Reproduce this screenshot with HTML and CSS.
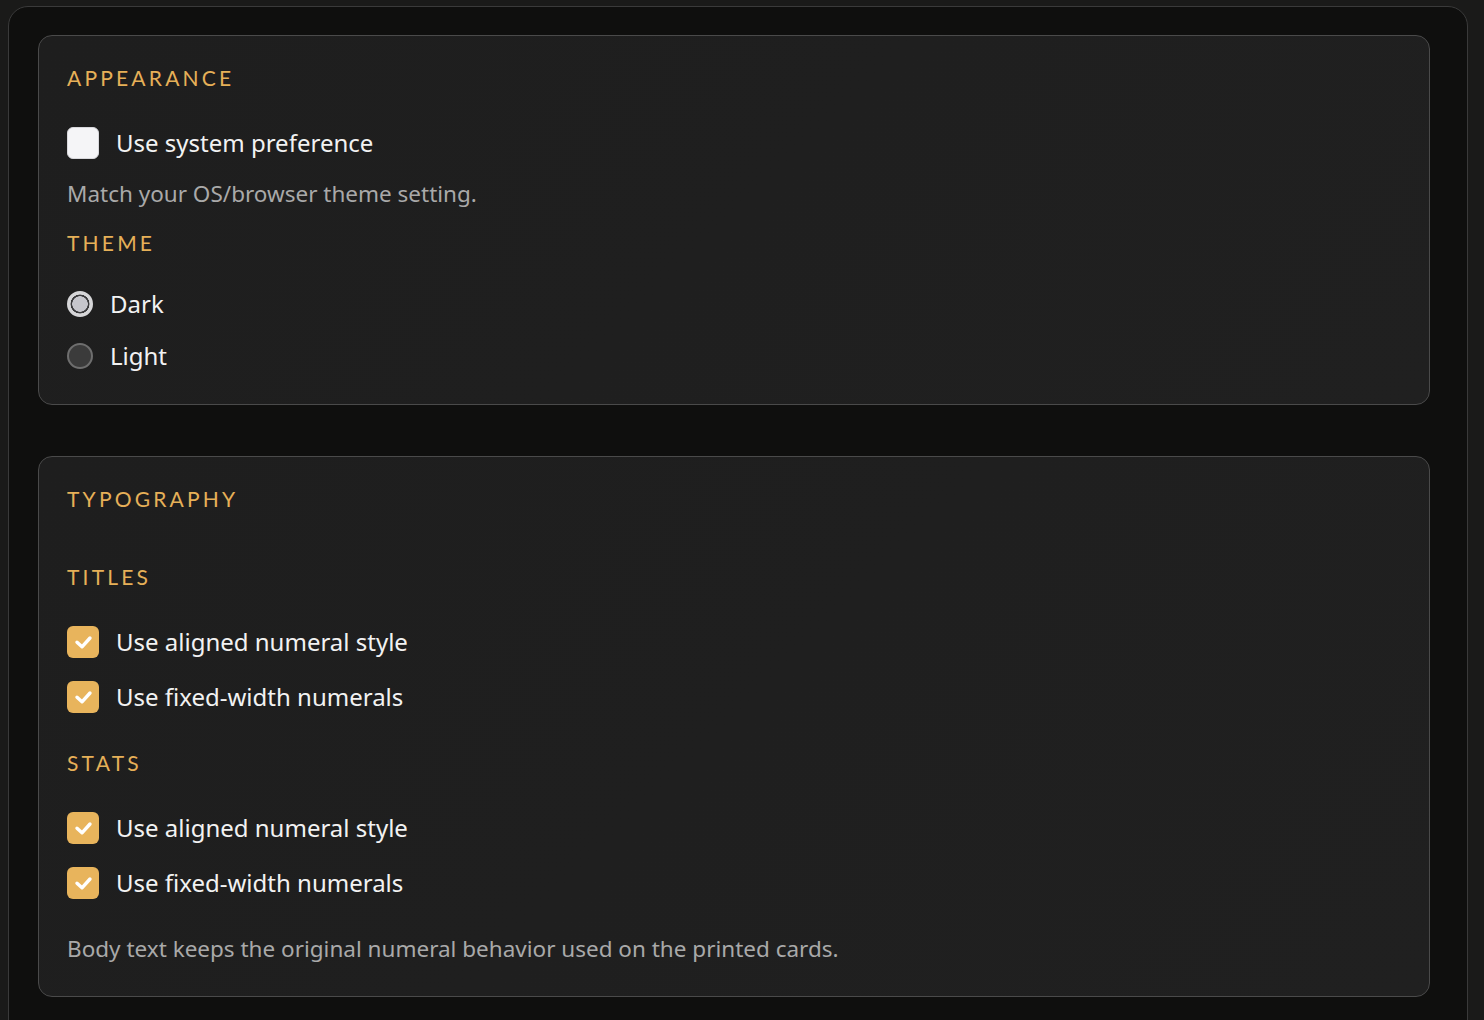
FILE: index.html
```html
<!DOCTYPE html>
<html lang="en">
<head>
<meta charset="utf-8">
<title>Settings</title>
<link rel="stylesheet" href="styles.css">
</head>
<body>
<div class="panel">
  <section class="card card-appearance">
    <h2 class="heading">Appearance</h2>
    <label class="row row-first">
      <span class="box"></span>
      <span class="label">Use system preference</span>
    </label>
    <p class="desc desc-sys">Match your OS/browser theme setting.</p>
    <h3 class="heading sub-theme">Theme</h3>
    <label class="row radio-row radio-first">
      <span class="radio checked"></span>
      <span class="label">Dark</span>
    </label>
    <label class="row radio-row radio-next">
      <span class="radio"></span>
      <span class="label">Light</span>
    </label>
  </section>

  <section class="card card-typo">
    <h2 class="heading">Typography</h2>
    <h3 class="heading sub-titles">Titles</h3>
    <label class="row row-first">
      <span class="box on"><svg viewBox="0 0 32 32" width="32" height="32"><path d="M10 16.2 L15 20.8 L23 12" fill="none" stroke="#fff" stroke-width="3.4" stroke-linecap="round" stroke-linejoin="round"/></svg></span>
      <span class="label">Use aligned numeral style</span>
    </label>
    <label class="row row-next">
      <span class="box on"><svg viewBox="0 0 32 32" width="32" height="32"><path d="M10 16.2 L15 20.8 L23 12" fill="none" stroke="#fff" stroke-width="3.4" stroke-linecap="round" stroke-linejoin="round"/></svg></span>
      <span class="label">Use fixed-width numerals</span>
    </label>
    <h3 class="heading sub-stats">Stats</h3>
    <label class="row row-first">
      <span class="box on"><svg viewBox="0 0 32 32" width="32" height="32"><path d="M10 16.2 L15 20.8 L23 12" fill="none" stroke="#fff" stroke-width="3.4" stroke-linecap="round" stroke-linejoin="round"/></svg></span>
      <span class="label">Use aligned numeral style</span>
    </label>
    <label class="row row-next">
      <span class="box on"><svg viewBox="0 0 32 32" width="32" height="32"><path d="M10 16.2 L15 20.8 L23 12" fill="none" stroke="#fff" stroke-width="3.4" stroke-linecap="round" stroke-linejoin="round"/></svg></span>
      <span class="label">Use fixed-width numerals</span>
    </label>
    <p class="desc desc-body">Body text keeps the original numeral behavior used on the printed cards.</p>
  </section>
</div>
</body>
</html>
```

FILE: styles.css
```css
* { box-sizing: border-box; }

html, body {
  margin: 0;
  height: 100%;
}

body {
  background: #1a1a19;
  padding: 6px 16px 0 8px;
  font-family: "Noto Sans", "Open Sans", sans-serif;
  overflow: hidden;
}

.panel {
  background: #0f0f0e;
  border: 1px solid #3a3a3a;
  border-radius: 20px;
  padding: 28px 37px 0 29px;
  min-height: 1100px;
}

.card {
  background: linear-gradient(135deg, #1e1e1e 0%, #202020 100%);
  border: 1px solid #4a4a4a;
  border-radius: 14px;
  padding: 28px 28px 32px 28px;
  display: flex;
  flex-direction: column;
}

.card + .card {
  margin-top: 51px;
}

.heading {
  margin: 0;
  font-family: "Lato", "Noto Sans", sans-serif;
  font-weight: 400;
  font-size: 21px;
  line-height: 28px;
  letter-spacing: 3.2px;
  text-transform: uppercase;
  color: #e6b058;
}

.row {
  display: flex;
  align-items: center;
  gap: 17px;
  height: 32px;
}

.row-first { margin-top: 35px; }
.row-next { margin-top: 23px; }

.radio-row { gap: 17px; }
.radio-first { margin-top: 31px; }
.radio-next { margin-top: 20px; }

.label {
  font-size: 24px;
  color: #f2f2f2;
  line-height: 32px;
}

.box {
  width: 32px;
  height: 32px;
  flex: none;
  border-radius: 6px;
  background: #f5f5f7;
  border: 1px solid #d8d8dc;
  display: flex;
}

.box.on {
  background: #e8b45c;
  border: none;
}

.box svg { display: block; }

.radio {
  width: 26px;
  height: 26px;
  flex: none;
  border-radius: 50%;
  background: #3b3b3b;
  border: 2px solid #6e6e6e;
}

.radio.checked {
  border: 2px solid #d6d6d8;
  background: radial-gradient(circle, #c6c6cc 0 7.5px, #3a3a3c 8px 9.2px, #d6d6d8 9.7px);
}

.desc {
  margin: 0;
  font-size: 22.5px;
  line-height: 30px;
  color: #a9a9a9;
}

.desc-sys { margin-top: 20px; }
.sub-theme { margin-top: 20px; }
.sub-titles { margin-top: 50px; }
.sub-stats { margin-top: 36px; }
.desc-body { margin-top: 35px; }
```
